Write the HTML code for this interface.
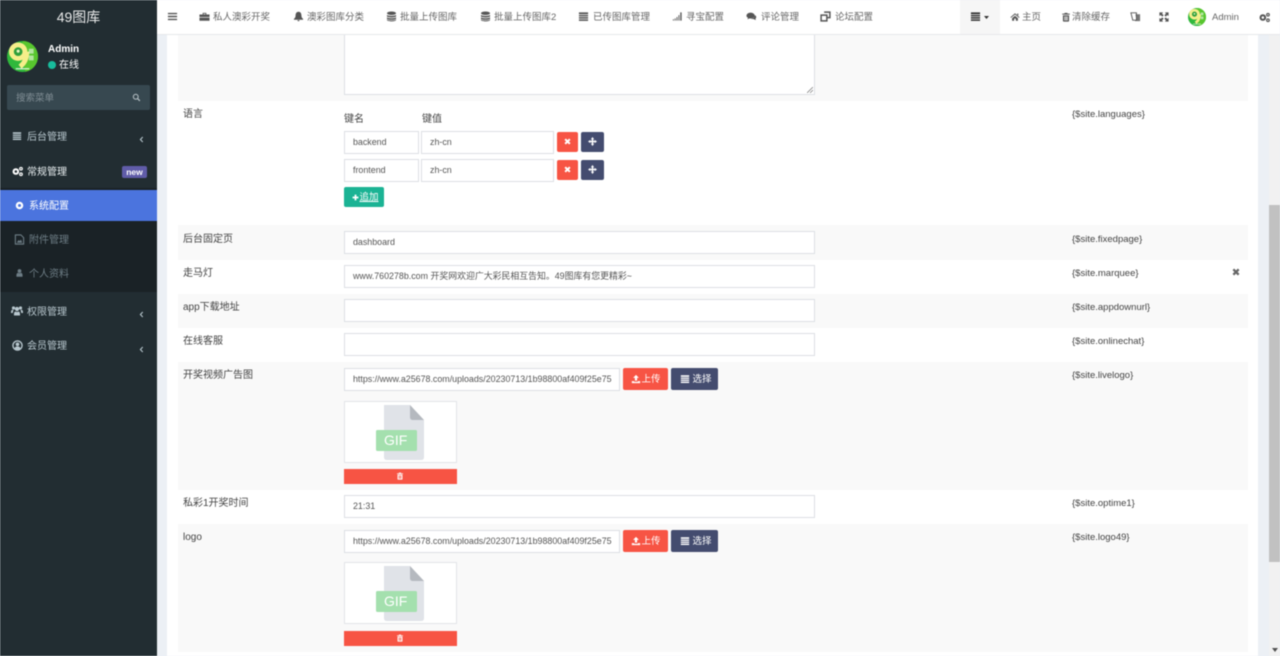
<!DOCTYPE html>
<html lang="zh-CN">
<head>
<meta charset="utf-8">
<title>49图库</title>
<style>
html{margin:0;padding:0;width:1280px;height:656px;overflow:hidden;background:#ecf0f5}
body{margin:0;padding:0;width:1280px;height:656px;overflow:hidden;background:#ecf0f5;font-family:"Liberation Sans","Noto Sans CJK SC",sans-serif;font-size:10px;color:#444;filter:blur(.4px)}
.a{position:absolute;white-space:nowrap}
svg{position:absolute;display:block}
#side{position:absolute;left:0;top:0;width:157px;height:656px;background:#222d32}
#content{position:absolute;left:167px;top:35px;width:1091px;height:621px;background:#fff}
.row{position:absolute;left:178px;width:1070px}
.g{background:#f9f9f9}
.lab{left:183px;font-size:10px;color:#444;line-height:14px;margin-top:2px}
.var{left:1072px;font-size:9.5px;color:#444;line-height:14px;margin-top:2px}
.inp{position:absolute;box-sizing:border-box;background:#fff;border:1px solid #dcdfe4;height:23px;line-height:21px;padding-left:8px;font-size:8.9px;color:#555;white-space:nowrap;overflow:hidden}
.btn{position:absolute;box-sizing:border-box;border-radius:2px;color:#fff;text-align:center;font-size:9.5px}
.red{background:#f75444}
.navy{background:#444c6f}
.m{color:#b8c7ce;font-size:10px;line-height:14px}
.m2{color:#6d7d85;font-size:10px;line-height:14px}
.t{font-size:9.5px;color:#666;line-height:14px}
</style>
</head>
<body>
<svg width="0" height="0" style="position:absolute">
<defs>
<symbol id="bars" viewBox="0 0 12 12"><path d="M1 2h10v1.600H1zM1 5.200h10v1.600H1zM1 8.400h10V10H1z" fill="currentColor"/></symbol>
<symbol id="list" viewBox="0 0 12 12"><path d="M1 1.500h10v2H1zM1 4.300h10v1.600H1zM1 6.700h10v1.600H1zM1 9.100h10v1.700H1z" fill="currentColor"/></symbol>
<symbol id="cogs" viewBox="0 0 12 12"><circle cx="4.200" cy="6" r="2.500" fill="none" stroke="currentColor" stroke-width="2.200"/><circle cx="9.800" cy="3" r="1.400" fill="none" stroke="currentColor" stroke-width="1.300"/><circle cx="9.800" cy="9" r="1.400" fill="none" stroke="currentColor" stroke-width="1.300"/></symbol>
<symbol id="brief" viewBox="0 0 12 12"><path d="M.5 3.800h11v2.800H.5zM.5 7.200h11v3.500H.5zM4 3.800V2h4v1.800H7V3H5v.8z" fill="currentColor"/></symbol>
<symbol id="bell" viewBox="0 0 12 12"><path d="M6 .8c2.300 0 3.200 2 3.200 4.200 0 2 1 3 1.800 3.600v.9H1v-.9C1.800 8 2.800 7 2.800 5 2.800 2.800 3.700.8 6 .8zM4.800 10h2.400a1.200 1.200 0 0 1-2.400 0z" fill="currentColor"/></symbol>
<symbol id="db" viewBox="0 0 12 12"><ellipse cx="6" cy="2.500" rx="5" ry="1.900" fill="currentColor"/><path d="M1 4.200c1 1.400 9 1.400 10 0v1.700c-1 1.500-9 1.500-10 0zM1 6.800c1 1.400 9 1.400 10 0v1.600c-1 1.500-9 1.500-10 0zM1 9.200c1 1.400 9 1.400 10 0v.7c-1 1.800-9 1.800-10 0z" fill="currentColor"/></symbol>
<symbol id="signal" viewBox="0 0 12 12"><path d="M1 9h1v1.500H1zM3 8h1v2.500H3zM5 6.500h1v4H5zM7 4.500h1v6H7zM9 1.500h1.500v9H9z" fill="currentColor"/></symbol>
<symbol id="chat" viewBox="0 0 12 12"><ellipse cx="5" cy="5" rx="4.500" ry="3.200" fill="currentColor"/><path d="M2.500 7l-1 2.200L5 7.500zM9.500 4.500c1.800.6 2.300 2.700.8 3.800l.5 1.700-2.800-1.300c-1 .1-2 0-2.500-.5 2.500 0 4.300-1.500 4-3.700z" fill="currentColor"/></symbol>
<symbol id="clone" viewBox="0 0 12 12"><path d="M4.500 1.200h6.300v6H7.500M1.200 4.500h6.300v6.300H1.200z" fill="none" stroke="currentColor" stroke-width="1.600"/></symbol>
<symbol id="home" viewBox="0 0 12 12"><path d="M6 1.500L11.500 6.300l-.7.700L6 3 1.200 7l-.7-.7zM2.500 7.500L6 4.500l3.500 3v3H7V8H5v2.500H2.500zM8.500 2H10v2.500L8.500 3.300z" fill="currentColor"/></symbol>
<symbol id="trash" viewBox="0 0 12 12"><path d="M4.500 1h3l.5 1h2.500v1.200h-9V2H4zM2.300 4h7.400v6.500c0 .5-.4 1-1 1H3.300c-.6 0-1-.5-1-1zM4 5.200v5h.9v-5zM5.600 5.200v5h.9v-5zM7.100 5.200v5H8v-5z" fill="currentColor"/></symbol>
<symbol id="exp" viewBox="0 0 12 12"><path d="M.5.500h4.500L3.600 1.900l2 2L3.900 5.600l-2-2L.5 5zM11.500.500V5L10.100 3.600l-2 2L6.400 3.900l2-2L7 .5zM.5 11.500V7l1.400 1.400 2-2 1.700 1.700-2 2L5 11.500zM11.500 11.500H7l1.400-1.400-2-2 1.700-1.700 2 2L11.500 7z" fill="currentColor"/></symbol>
<symbol id="lang" viewBox="0 0 12 12"><path d="M1 2h6v8H3z" fill="none" stroke="currentColor" stroke-width="1"/><path d="M6 3.500h5v7.500H5.500L5 10h2z" fill="currentColor" opacity=".8"/></symbol>
<symbol id="x" viewBox="0 0 12 12"><path d="M3.200.8L6 3.600 8.800.8l2.400 2.400L8.400 6l2.800 2.800-2.400 2.400L6 8.400l-2.800 2.800L.8 8.800 3.600 6 .8 3.200z" fill="currentColor"/></symbol>
<symbol id="move" viewBox="0 0 12 12"><path d="M6 0L8.200 3H7v2h2V3.800L12 6 9 8.200V7H7v2h1.200L6 12 3.800 9H5V7H3v1.200L0 6l3-2.200V5h2V3H3.800z" fill="currentColor"/></symbol>
<symbol id="plus" viewBox="0 0 12 12"><path d="M4.500 1h3v3.500H11v3H7.500V11h-3V7.500H1v-3h3.500z" fill="currentColor"/></symbol>
<symbol id="up" viewBox="0 0 12 12"><path d="M6 1l3.500 3.700H7.300V8H4.700V4.700H2.500zM1 8.500h2.700v.8h4.600v-.8H11V11H1z" fill="currentColor"/></symbol>
<symbol id="user" viewBox="0 0 12 12"><circle cx="6" cy="3.300" r="2.500" fill="currentColor"/><path d="M2 11c-.5-3 .5-5 2-5.300 1 .9 3 .9 4 0 1.500.3 2.500 2.300 2 5.300z" fill="currentColor"/></symbol>
<symbol id="users" viewBox="0 0 12 12"><circle cx="6" cy="4" r="2.100" fill="currentColor"/><circle cx="2.500" cy="3" r="1.600" fill="currentColor"/><circle cx="9.500" cy="3" r="1.600" fill="currentColor"/><path d="M3 10.500c-.2-2.500.3-3.700 1.500-4 .8.600 2.200.6 3 0 1.200.3 1.700 1.500 1.500 4zM0 8c0-2 .3-3 1.500-3.200.4.300.8.500 1.200.5-.5.500-.8 1.300-.9 2.700zM12 8c0-2-.3-3-1.500-3.200-.4.300-.8.500-1.200.5.500.5.800 1.300.9 2.700z" fill="currentColor"/></symbol>
<symbol id="ucircle" viewBox="0 0 12 12"><circle cx="6" cy="6" r="5" fill="none" stroke="currentColor" stroke-width="1.500"/><circle cx="6" cy="4.700" r="2" fill="currentColor"/><path d="M2.800 9.300c.5-1.800 1.500-2.300 3.200-2.300s2.700.5 3.200 2.300C8 10.700 4 10.700 2.800 9.300z" fill="currentColor"/></symbol>
<symbol id="gear" viewBox="0 0 12 12"><circle cx="6" cy="6" r="3.500" fill="none" stroke="currentColor" stroke-width="3"/></symbol>
<symbol id="pic" viewBox="0 0 12 12"><path d="M1.500 1h6L10.500 4v7h-9z" fill="none" stroke="currentColor" stroke-width="1.200"/><path d="M3 9.500L5 6.500l1.300 1.300L7.500 6l1.500 3.500z" fill="currentColor"/></symbol>
<symbol id="search" viewBox="0 0 12 12"><circle cx="5" cy="5" r="3.200" fill="none" stroke="currentColor" stroke-width="1.500"/><path d="M7.400 7.400L10.500 10.500" stroke="currentColor" stroke-width="1.800"/></symbol>
<symbol id="chev" viewBox="0 0 6 8"><path d="M4.500 1L1.700 4l2.800 3" fill="none" stroke="currentColor" stroke-width="1.300"/></symbol>
<symbol id="logo" viewBox="0 0 32 32"><circle cx="16" cy="16" r="16" fill="#30b83c"/><path d="M16 0a16 16 0 0 1 16 16 16 16 0 0 1-13 15.700L16 16z" fill="#58c62e"/><circle cx="11.500" cy="11" r="7" fill="#2f9f3a" stroke="#f5ee8a" stroke-width="5"/><path d="M20.500 11c0 7-2.500 12-7 15.500" fill="none" stroke="#f5ee8a" stroke-width="5"/><circle cx="11.500" cy="10.500" r="1.600" fill="#e8f4c0"/><path d="M22.500 8h5v5h-5zM22.500 15h5v5h-5z" fill="#fff" opacity=".55"/><path d="M9 28h14v1.300H9z" fill="#fff" opacity=".8"/></symbol>
<symbol id="gif" viewBox="0 0 48 56"><path d="M8 1h26l14 15v37c0 2-1 3-3 3H11c-2 0-3-1-3-3z" fill="#e0e3e8"/><path d="M34 1l14 15H37c-2 0-3-1-3-3z" fill="#b5b9bf"/><rect x="0" y="26" width="41" height="21" rx="1.500" fill="#a4e0ae"/></symbol>
</defs>
</svg>

<div id="content"></div>

<!-- rows -->
<div class="row g" style="top:35px;height:66px"></div>
<div class="row g" style="top:225px;height:35px"></div>
<div class="row g" style="top:294px;height:34px"></div>
<div class="row g" style="top:362px;height:128px"></div>
<div class="row g" style="top:524px;height:128px"></div>

<!-- textarea -->
<div class="a" style="left:344px;top:30px;width:469px;height:63px;background:#fff;border:1px solid #dcdfe4"></div>
<svg style="left:807px;top:87px" width="6" height="6"><path d="M0 6L6 0M3 6L6 3" stroke="#888" stroke-width=".8"/></svg>

<!-- languages -->
<div class="a lab" style="top:106px">语言</div>
<div class="a lab" style="top:111px;left:344px">键名</div>
<div class="a lab" style="top:111px;left:422px">键值</div>
<div class="inp" style="left:344px;top:131px;width:75px">backend</div>
<div class="inp" style="left:421px;top:131px;width:133px">zh-cn</div>
<div class="btn red" style="left:557px;top:132px;width:21px;height:20px"><svg style="left:7px;top:6px;color:#fff" width="7" height="7"><use href="#x"/></svg></div>
<div class="btn navy" style="left:581px;top:132px;width:23px;height:20px"><svg style="left:7px;top:5px;color:#fff" width="9" height="9"><use href="#move"/></svg></div>
<div class="inp" style="left:344px;top:159px;width:75px">frontend</div>
<div class="inp" style="left:421px;top:159px;width:133px">zh-cn</div>
<div class="btn red" style="left:557px;top:160px;width:21px;height:20px"><svg style="left:7px;top:6px;color:#fff" width="7" height="7"><use href="#x"/></svg></div>
<div class="btn navy" style="left:581px;top:160px;width:23px;height:20px"><svg style="left:7px;top:5px;color:#fff" width="9" height="9"><use href="#move"/></svg></div>
<div class="btn" style="left:344px;top:187px;width:40px;height:20px;background:#1bb394;line-height:21px;padding-left:10px;text-decoration:underline"><svg style="left:8px;top:7px;color:#fff" width="7" height="7"><use href="#plus"/></svg>追加</div>
<div class="a var" style="top:106px">{$site.languages}</div>

<!-- fixedpage -->
<div class="a lab" style="top:231px">后台固定页</div>
<div class="inp" style="left:344px;top:231px;width:471px">dashboard</div>
<div class="a var" style="top:231px">{$site.fixedpage}</div>

<!-- marquee -->
<div class="a lab" style="top:265px">走马灯</div>
<div class="inp" style="left:344px;top:265px;width:471px">www.760278b.com 开奖网欢迎广大彩民相互告知。49图库有您更精彩~</div>
<div class="a var" style="top:265px">{$site.marquee}</div>
<svg style="left:1232px;top:268px;color:#666" width="8" height="8"><use href="#x"/></svg>

<!-- app -->
<div class="a lab" style="top:299px">app下载地址</div>
<div class="inp" style="left:344px;top:299px;width:471px"></div>
<div class="a var" style="top:299px">{$site.appdownurl}</div>

<!-- online -->
<div class="a lab" style="top:333px">在线客服</div>
<div class="inp" style="left:344px;top:333px;width:471px"></div>
<div class="a var" style="top:333px">{$site.onlinechat}</div>

<!-- livelogo -->
<div class="a lab" style="top:367px">开奖视频广告图</div>
<div class="inp" style="left:344px;top:368px;width:276px">https://www.a25678.com/uploads/20230713/1b98800af409f25e75</div>
<div class="btn red" style="left:623px;top:368px;width:45px;height:22px;line-height:23px;padding-left:11px"><svg style="left:8px;top:6px;color:#fff" width="10" height="10"><use href="#up"/></svg>上传</div>
<div class="btn navy" style="left:671px;top:368px;width:47px;height:22px;line-height:23px;padding-left:15px"><svg style="left:9px;top:6px;color:#fff" width="10" height="10"><use href="#list"/></svg>选择</div>
<div class="a" style="left:344px;top:401px;width:111px;height:60px;background:#fff;border:1px solid #e2e4e8"></div>
<svg style="left:376px;top:404px" width="48" height="56"><use href="#gif"/></svg>
<div class="a" style="left:384px;top:432px;font-size:14px;color:#fff;line-height:16px">GIF</div>
<div class="a" style="left:344px;top:469px;width:113px;height:15px;background:#f75444"></div>
<svg style="left:396px;top:472px;color:#fff" width="8" height="8"><use href="#trash"/></svg>
<div class="a var" style="top:367px">{$site.livelogo}</div>

<!-- optime -->
<div class="a lab" style="top:495px">私彩1开奖时间</div>
<div class="inp" style="left:344px;top:495px;width:471px">21:31</div>
<div class="a var" style="top:495px">{$site.optime1}</div>

<!-- logo -->
<div class="a lab" style="top:529px">logo</div>
<div class="inp" style="left:344px;top:530px;width:276px">https://www.a25678.com/uploads/20230713/1b98800af409f25e75</div>
<div class="btn red" style="left:623px;top:530px;width:45px;height:22px;line-height:23px;padding-left:11px"><svg style="left:8px;top:6px;color:#fff" width="10" height="10"><use href="#up"/></svg>上传</div>
<div class="btn navy" style="left:671px;top:530px;width:47px;height:22px;line-height:23px;padding-left:15px"><svg style="left:9px;top:6px;color:#fff" width="10" height="10"><use href="#list"/></svg>选择</div>
<div class="a" style="left:344px;top:562px;width:111px;height:60px;background:#fff;border:1px solid #e2e4e8"></div>
<svg style="left:376px;top:565px" width="48" height="56"><use href="#gif"/></svg>
<div class="a" style="left:384px;top:593px;font-size:14px;color:#fff;line-height:16px">GIF</div>
<div class="a" style="left:344px;top:631px;width:113px;height:15px;background:#f75444"></div>
<svg style="left:396px;top:634px;color:#fff" width="8" height="8"><use href="#trash"/></svg>
<div class="a var" style="top:529px">{$site.logo49}</div>

<!-- scrollbar -->
<div class="a" style="left:1269px;top:0;width:11px;height:656px;background:#f1f1f1"></div>
<div class="a" style="left:1269px;top:205px;width:11px;height:357px;background:#c1c1c1"></div>
<svg style="left:1272px;top:648px" width="6" height="4"><path d="M0 0h6L3 4z" fill="#505050"/></svg>

<!-- top nav -->
<div class="a" style="left:157px;top:0;width:1123px;height:34px;background:#fff;border-bottom:1px solid #e6e8eb"></div>
<div class="a" style="left:960px;top:0;width:40px;height:34px;background:#f6f6f6"></div>
<svg style="left:167px;top:11px;color:#555" width="11" height="11"><use href="#bars"/></svg>
<svg style="left:199px;top:11px;color:#555" width="11" height="11"><use href="#brief"/></svg><div class="a t" style="left:213px;top:11px">私人澳彩开奖</div>
<svg style="left:293px;top:11px;color:#555" width="11" height="11"><use href="#bell"/></svg><div class="a t" style="left:307px;top:11px">澳彩图库分类</div>
<svg style="left:386px;top:11px;color:#555" width="11" height="11"><use href="#db"/></svg><div class="a t" style="left:400px;top:11px">批量上传图库</div>
<svg style="left:480px;top:11px;color:#555" width="11" height="11"><use href="#db"/></svg><div class="a t" style="left:494px;top:11px">批量上传图库2</div>
<svg style="left:578px;top:11px;color:#555" width="11" height="11"><use href="#list"/></svg><div class="a t" style="left:593px;top:11px">已传图库管理</div>
<svg style="left:672px;top:11px;color:#555" width="11" height="11"><use href="#signal"/></svg><div class="a t" style="left:686px;top:11px">寻宝配置</div>
<svg style="left:746px;top:11px;color:#555" width="11" height="11"><use href="#chat"/></svg><div class="a t" style="left:761px;top:11px">评论管理</div>
<svg style="left:820px;top:11px;color:#555" width="11" height="11"><use href="#clone"/></svg><div class="a t" style="left:835px;top:11px">论坛配置</div>
<svg style="left:970px;top:11px;color:#333" width="11" height="11"><use href="#list"/></svg>
<svg style="left:984px;top:16px" width="5" height="3"><path d="M0 0h5L2.500 3z" fill="#333"/></svg>
<svg style="left:1010px;top:12px;color:#555" width="10" height="10"><use href="#home"/></svg><div class="a t" style="left:1022px;top:11px">主页</div>
<svg style="left:1061px;top:12px;color:#555" width="10" height="10"><use href="#trash"/></svg><div class="a t" style="left:1072px;top:11px">清除缓存</div>
<svg style="left:1130px;top:11px;color:#555" width="11" height="11"><use href="#lang"/></svg>
<svg style="left:1159px;top:12px;color:#555" width="10" height="10"><use href="#exp"/></svg>
<svg style="left:1188px;top:8px" width="18" height="18"><use href="#logo"/></svg>
<div class="a t" style="left:1212px;top:11px">Admin</div>
<svg style="left:1259px;top:12px;color:#555" width="11" height="11"><use href="#cogs"/></svg>

<!-- sidebar -->
<div id="side">
<div class="a" style="left:0;width:157px;top:7px;text-align:center;color:#fff;font-size:14px;line-height:20px;opacity:.9">49图库</div>
<svg style="left:7px;top:41px" width="31" height="31"><use href="#logo"/></svg>
<div class="a" style="left:48px;top:43px;color:#fff;font-size:10px;font-weight:bold;line-height:14px">Admin</div>
<div class="a" style="left:48px;top:61px;width:8px;height:8px;border-radius:50%;background:#18bc9c"></div>
<div class="a" style="left:59px;top:59px;color:#fff;font-size:10px;line-height:14px">在线</div>
<div class="a" style="left:7px;top:85px;width:143px;height:25px;background:#374850;border-radius:2px"></div>
<div class="a" style="left:16px;top:92px;color:#7f8c93;font-size:9.5px;line-height:13px">搜索菜单</div>
<svg style="left:132px;top:93px;color:#aeb8bd" width="9" height="9"><use href="#search"/></svg>

<svg style="left:12px;top:131px;color:#b8c7ce" width="10" height="10"><use href="#list"/></svg>
<div class="a m" style="left:27px;top:131px">后台管理</div>
<svg style="left:139px;top:136px;color:#b8c7ce" width="5" height="7"><use href="#chev"/></svg>

<svg style="left:12px;top:166px;color:#fff" width="11" height="11"><use href="#cogs"/></svg>
<div class="a m" style="left:27px;top:166px;color:#e8eef0">常规管理</div>
<div class="a" style="left:122px;top:166px;width:25px;height:12px;background:#605ca8;border-radius:2px;color:#fff;font-size:8.5px;font-weight:bold;line-height:12px;text-align:center">new</div>

<div class="a" style="left:0;top:188px;width:157px;height:104px;background:#1a2226"></div>
<div class="a" style="left:0;top:190px;width:157px;height:31px;background:#4b74de"></div>
<svg style="left:15px;top:201px;color:#fff" width="9" height="9"><use href="#gear"/></svg>
<div class="a" style="left:29px;top:200px;color:#fff;font-size:10px;line-height:14px">系统配置</div>
<svg style="left:14px;top:234px;color:#6d7d85" width="11" height="11"><use href="#pic"/></svg>
<div class="a m2" style="left:29px;top:234px">附件管理</div>
<svg style="left:15px;top:268px;color:#6d7d85" width="9" height="10"><use href="#user"/></svg>
<div class="a m2" style="left:29px;top:268px">个人资料</div>

<svg style="left:11px;top:305px;color:#b8c7ce" width="12" height="12"><use href="#users"/></svg>
<div class="a m" style="left:27px;top:306px">权限管理</div>
<svg style="left:139px;top:311px;color:#b8c7ce" width="5" height="7"><use href="#chev"/></svg>
<svg style="left:12px;top:340px;color:#b8c7ce" width="11" height="11"><use href="#ucircle"/></svg>
<div class="a m" style="left:27px;top:340px">会员管理</div>
<svg style="left:139px;top:346px;color:#b8c7ce" width="5" height="7"><use href="#chev"/></svg>
</div>
</body>
</html>
